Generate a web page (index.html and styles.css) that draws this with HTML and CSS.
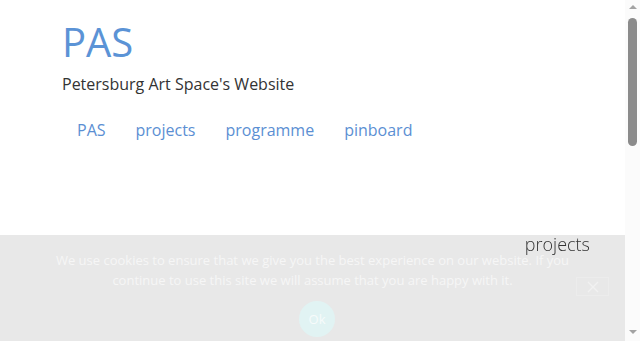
FILE: index.html
```html
<!DOCTYPE html>
<html lang="en">
<head>
<meta charset="utf-8">
<title>PAS</title>
<link rel="stylesheet" href="styles.css">
</head>
<body>
<header class="site-header">
  <h1 class="site-title"><a href="#">PAS</a></h1>
  <p class="site-description">Petersburg Art Space's Website</p>
  <nav class="main-nav">
    <a href="#">PAS</a>
    <a href="#">projects</a>
    <a href="#">programme</a>
    <a href="#">pinboard</a>
  </nav>
</header>
<main class="content"></main>
<div class="widget-title">projects</div>
<div class="cookie-bar">
  <p class="cookie-text">We use cookies to ensure that we give you the best experience on our website. If you continue to use this site we will assume that you are happy with it.</p>
  <button class="cookie-ok">Ok</button>
  <button class="cookie-close" aria-label="close">
    <svg width="14" height="12" viewBox="0 0 14 12"><path d="M2 1 L12 11 M12 1 L2 11" stroke="#f1f1f1" stroke-width="1.4" fill="none"/></svg>
  </button>
</div>
<div class="scrollbar" aria-hidden="true">
  <span class="sb-arrow sb-up"></span>
  <span class="sb-track"><span class="sb-thumb"></span></span>
  <span class="sb-arrow sb-down"></span>
</div>
</body>
</html>
```
FILE: styles.css
```css
html, body {
  margin: 0;
  padding: 0;
}
html {
  overflow: hidden;
}
body {
  font-family: "Open Sans", "Liberation Sans", sans-serif;
  background: #ffffff;
  color: #333333;
  margin-right: 15px;
}
.site-header {
  padding: 16px 0 0 62px;
}
.site-title {
  margin: 0;
  font-size: 40px;
  font-weight: 400;
  line-height: 52px;
}
.site-title a {
  color: #5b93d6;
  text-decoration: none;
}
.site-description {
  margin: 5px 0 0 0;
  font-size: 16px;
  line-height: 22px;
  color: #333333;
}
.main-nav {
  display: flex;
  margin-top: 19px;
}
.main-nav a {
  padding: 5px 15px;
  font-size: 16px;
  line-height: 22px;
  color: #5b8fd3;
  text-decoration: none;
}
.content {
  min-height: 700px;
}
.widget-title {
  position: fixed;
  top: 231px;
  right: 50px;
  z-index: 20;
  font-size: 18px;
  font-weight: 300;
  color: #333333;
  line-height: 26px;
}
.cookie-bar {
  position: fixed;
  left: 0;
  right: 15px;
  bottom: 0;
  height: 106px;
  background: #e8e8e8;
  z-index: 10;
  display: flex;
  flex-direction: column;
  align-items: center;
}
.cookie-text {
  margin: 15px 0 0 0;
  max-width: 525px;
  text-align: center;
  font-size: 13px;
  line-height: 20px;
  color: #f6f6f6;
}
.cookie-ok {
  margin: 11px 0 0 9px;
  width: 36px;
  height: 36px;
  border-radius: 50%;
  border: none;
  background: #e1f3f3;
  color: #f7fbfb;
  font-family: "Open Sans", "Liberation Sans", sans-serif;
  font-size: 13px;
  padding: 0;
}
.cookie-close {
  position: absolute;
  top: 42px;
  right: 16px;
  width: 33px;
  height: 19px;
  border: 1px solid #ececec;
  background: transparent;
  padding: 0;
  display: flex;
  align-items: center;
  justify-content: center;
}
.scrollbar {
  position: fixed;
  top: 0;
  right: 0;
  bottom: 0;
  width: 15px;
  background: #fbfbfb;
  display: flex;
  flex-direction: column;
  align-items: center;
  z-index: 30;
}
.sb-arrow {
  width: 0;
  height: 0;
  border-left: 4px solid transparent;
  border-right: 4px solid transparent;
}
.sb-up {
  margin-top: 5px;
  border-bottom: 4px solid #a3a3a3;
}
.sb-down {
  margin-bottom: 7px;
  border-top: 4px solid #a3a3a3;
}
.sb-track {
  flex: 1;
  width: 100%;
  display: flex;
  justify-content: center;
  padding-top: 9px;
}
.sb-thumb {
  width: 9px;
  height: 128px;
  border-radius: 5px;
  background: #8b8b8b;
}
```
